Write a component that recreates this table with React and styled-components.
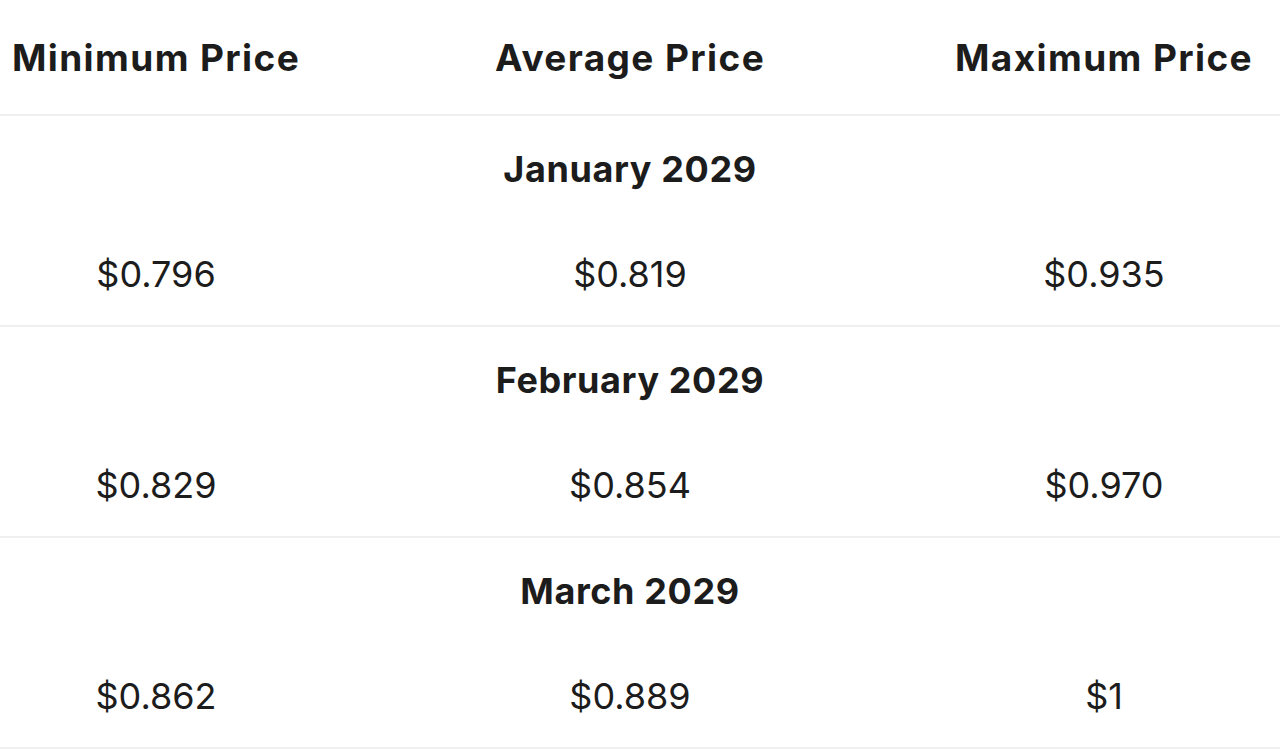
import React from 'react';
import styled, { createGlobalStyle } from 'styled-components';

const GlobalStyle = createGlobalStyle`
  body {
    margin: 0;
    background: #ffffff;
    font-family: "Inter", "DejaVu Sans", sans-serif;
    color: #1c1c1c;
  }
`

const months = [
    { name: 'January 2029', min: '$0.796', avg: '$0.819', max: '$0.935' },
    { name: 'February 2029', min: '$0.829', avg: '$0.854', max: '$0.970' },
    { name: 'March 2029', min: '$0.862', avg: '$0.889', max: '$1' },
]

const App = () => {
    return (
        <>
            <GlobalStyle />
            <Table>
                <HeadRow>
                    <HeadCell>Minimum Price</HeadCell>
                    <HeadCell>Average Price</HeadCell>
                    <HeadCell>Maximum Price</HeadCell>
                </HeadRow>
                {months.map((m) => (
                    <MonthBlock key={m.name}>
                        <MonthTitle>{m.name}</MonthTitle>
                        <PriceRow>
                            <Price>{m.min}</Price>
                            <Price>{m.avg}</Price>
                            <Price>{m.max}</Price>
                        </PriceRow>
                    </MonthBlock>
                ))}
            </Table>
        </>
    );
};

export default App;

const Table = styled.div`
    width: 1280px;
    height: 750px;
    overflow: hidden;
`

const HeadRow = styled.div`
    display: grid;
    grid-template-columns: 312px 636px 312px;
    align-items: center;
    height: 114px;
    padding-right: 20px;
    border-bottom: 2px solid #efefef;
`

const HeadCell = styled.div`
    text-align: center;
    font-weight: 700;
    font-size: 37px;
    letter-spacing: 1.4px;
    white-space: nowrap;
`

const MonthBlock = styled.div`
    display: flex;
    flex-direction: column;
    height: 209px;
    padding-right: 20px;
    border-bottom: 2px solid #efefef;
`

const MonthTitle = styled.div`
    height: 106px;
    display: flex;
    align-items: center;
    justify-content: center;
    font-weight: 700;
    font-size: 36px;
    letter-spacing: 0.6px;
`

const PriceRow = styled.div`
    display: grid;
    grid-template-columns: 312px 636px 312px;
    align-items: center;
    flex: 1;
`

const Price = styled.div`
    text-align: center;
    font-size: 36px;
    font-weight: 400;
`
